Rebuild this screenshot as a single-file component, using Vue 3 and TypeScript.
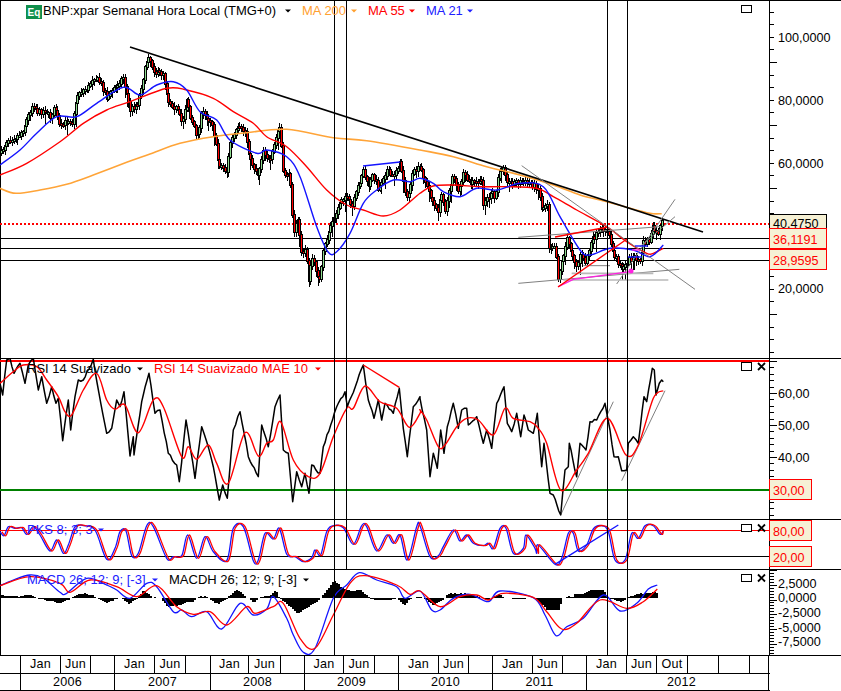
<script setup lang="ts">
type Pt = [number, number]

function z(xo: number, yo: number, a: number[]): Pt[] {
  const out: Pt[] = []
  for (let i = 0; i < a.length; i += 2) out.push([xo + a[i] / 3, yo + a[i + 1] / 3])
  return out
}
const poly = (p: Pt[]) => p.map((q) => `${q[0].toFixed(1)},${q[1].toFixed(1)}`).join(' ')
function smooth(p: Pt[]): string {
  let d = `M${p[0][0].toFixed(1)} ${p[0][1].toFixed(1)}`
  for (let i = 0; i < p.length - 1; i++) {
    const a = p[Math.max(i - 1, 0)]
    const b = p[i]
    const c = p[i + 1]
    const e = p[Math.min(i + 2, p.length - 1)]
    const c1x = b[0] + (c[0] - a[0]) / 6
    const c1y = b[1] + (c[1] - a[1]) / 6
    const c2x = c[0] - (e[0] - b[0]) / 6
    const c2y = c[1] - (e[1] - b[1]) / 6
    d += `C${c1x.toFixed(1)} ${c1y.toFixed(1)} ${c2x.toFixed(1)} ${c2y.toFixed(1)} ${c[0].toFixed(1)} ${c[1].toFixed(1)}`
  }
  return d
}
let seed = 7
const rnd = () => {
  seed = (seed * 16807) % 2147483647
  return seed / 2147483647
}
/* walk a traced outline in weekly steps, adding a little noise between key points */
function weekly(p: Pt[], noise: number): Pt[] {
  const out: Pt[] = []
  for (let i = 0; i < p.length - 1; i++) {
    const [x0, y0] = p[i]
    const [x1, y1] = p[i + 1]
    out.push([x0, y0])
    const n = Math.floor((x1 - x0) / 1.82)
    for (let k = 1; k < n; k++) {
      const t = k / n
      out.push([x0 + (x1 - x0) * t, y0 + (y1 - y0) * t + (rnd() - 0.5) * noise])
    }
  }
  out.push(p[p.length - 1])
  return out
}
function at(p: Pt[], x: number): number {
  for (let i = 0; i < p.length - 1; i++) {
    if (x <= p[i + 1][0]) {
      const t = (x - p[i][0]) / Math.max(p[i + 1][0] - p[i][0], 0.01)
      return p[i][1] + Math.max(t, 0) * (p[i + 1][1] - p[i][1])
    }
  }
  return p[p.length - 1][1]
}

/* ---- price ---- */
const pricePath: number[] = [1,153,7,140,17,137,22,132,28,117,33,103,38,113,45,110,50,117,55,108,60,128,67,120,72,122,78,93,88,88,93,77,100,82,107,98,115,87,123,78,130,110,138,103,143,78,148,55,155,73,163,73,168,100,177,110,182,123,187,97,190,117,197,137,202,112,212,123,215,140,218,163,222,167,227,172,230,143,238,128,245,132,250,160,258,175,263,150,270,163,277,133,280,127,283,173,290,177,292,207,293,233,298,220,302,258,306,247,308,283,312,258,320,282,323,253,330,227,335,217,340,200,345,197,352,207,357,190,363,170,368,187,373,175,378,188,387,170,392,177,400,163,407,200,413,173,420,167,428,190,437,213,442,193,445,210,453,173,458,193,463,175,470,183,482,182,483,203,492,193,495,200,498,177,503,165,508,183,517,182,530,183,538,188,542,210,547,203,548,247,555,245,558,278,562,260,567,240,577,267,580,253,585,263,592,240,598,233,605,228,610,240,613,253,623,270,628,260,635,257,640,263,643,243,650,240,652,227,657,235,662,222]
const pricePts: Pt[] = []
for (let i = 0; i < pricePath.length; i += 2) pricePts.push([pricePath[i], pricePath[i + 1]])

interface Candle { x: number; hi: number; lo: number; top: number; h: number; up: boolean }
const candles: Candle[] = []
let prev = at(pricePts, 1)
for (let x = 1; x <= 662; x += 1.82) {
  const px = Math.round(x)
  const close = at(pricePts, x) + (rnd() - 0.5) * 5
  const top = Math.min(prev, close) - 1
  const bot = Math.max(prev, close) + 1
  candles.push({
    x: px,
    hi: top - 1 - rnd() * 3,
    lo: bot + 1 + rnd() * (rnd() > 0.8 ? 11 : 4),
    top,
    h: Math.max(bot - top, 3),
    up: close < prev,
  })
  prev = close
}

const ma200 = smooth([
  ...z(0,0,[0,565,48,580,120,570,200,553,280,525,380,487,450,462,540,430,640,410,740,398,860,388,1000,413,1100,422,1260,450]),
  ...z(420,0,[100,470,200,500,300,525,400,555,480,585,560,605,620,622,690,640,725,641]),
])
const ma55 = smooth([
  ...z(0,0,[0,525,80,490,180,425,250,370,320,330,390,305,500,265,560,270,640,295,700,335,760,370,800,410,860,440,920,500,980,570,1040,615,1090,630,1150,648,1200,630,1260,580]),
  ...z(420,0,[40,558,100,555,180,560,260,560,350,565,400,590,470,630,560,680,620,725,680,760,700,760,730,745]),
])
const ma21 = smooth([
  ...z(0,0,[0,495,60,450,110,400,170,350,230,350,290,310,370,262,420,285,470,255,520,245,560,270,600,335,650,360,690,420,770,460,800,450,860,470,900,530,950,680,985,757,1010,755,1050,700,1090,610,1130,570,1180,540,1230,545,1260,535]),
  ...z(420,0,[40,550,70,575,120,590,170,565,230,570,300,550,370,560,420,650,480,750,510,765,570,745,640,750,690,770,730,735]),
])

const grayLines = [
  [305,497,825,868],[590,852,765,598],[295,712,720,680],[295,850,778,808],[660,740,765,650],[490,797,570,797],
].map((l) => ({ x1: 420 + l[0] / 3, y1: l[1] / 3, x2: 420 + l[2] / 3, y2: l[3] / 3 }))
const paleLines = [
  [455,820,700,820],[430,840,745,840],
].map((l) => ({ x1: 420 + l[0] / 3, y1: l[1] / 3, x2: 420 + l[2] / 3, y2: l[3] / 3 }))
const magenta = poly(z(420,0,[415,860,460,838,630,815]))

/* ---- RSI ---- */
const rsiBlack = poly(weekly([
  ...z(0,350,[0,100,8,135,20,30,30,25,42,70,60,40,75,100,85,45,100,25,115,120,125,80,140,160,155,110,168,160,175,145,188,272,205,150,212,240,225,140,235,90,250,90,280,28,297,130,320,250,335,235,350,150,360,170,372,125,390,318,400,260,402,315,425,155,447,70,465,190,480,180,505,310,530,345,538,395,558,210,585,385,605,230,620,275,640,350,658,450,668,405,682,445,700,240,720,185,745,320,775,380,785,225,805,290,825,170,840,135,850,300,865,310,878,455,890,365,905,410,915,370,927,430,935,345,960,370,970,290,1003,190,1010,170,1035,125,1042,170,1090,45,1105,150,1122,205,1135,150,1145,210,1155,160,1180,190,1198,115,1210,235,1222,320,1240,170,1260,140]),
  ...z(420,350,[0,145,20,240,30,380,40,310,52,355,62,240,72,310,82,230,100,160,115,235,125,180,140,175,145,225,170,200,190,280,200,240,215,295,230,160,252,110,262,220,275,245,290,190,302,260,312,195,325,240,340,250,352,190,365,350,372,280,390,430,400,435,422,495,435,360,445,350,448,280,470,380,480,280,498,300,510,215,530,210,555,160,570,240,582,320,595,320,605,362,620,360,625,280,640,260,655,280,672,140,680,155,697,55,703,60,708,135,718,100,725,90,730,95]),
], 3))
const rsiRed = smooth([
  ...z(0,350,[0,100,40,65,70,45,110,50,140,90,175,140,195,185,215,195,250,120,290,70,320,150,345,178,375,165,415,248,460,150,490,170,545,320,565,290,590,328,625,285,650,340,685,400,735,248,775,318,800,280,820,270,842,215,880,330,925,380,960,370,1000,260,1040,175,1060,175,1095,108,1140,155,1190,175,1228,232,1260,190]),
  ...z(420,350,[0,180,20,210,55,290,75,285,110,230,140,205,175,210,220,255,255,175,280,205,330,215,355,235,380,280,422,420,470,360,505,310,562,205,618,315,655,285,700,145,730,122]),
])
const rsiDiag = poly(z(0,350,[1090,45,1198,112]))
const rsiGray = [poly(z(420,350,[422,495,580,155])), poly(z(420,350,[605,392,735,122]))]

/* ---- PKS ---- */
const pksPts: Pt[] = [
  ...z(0,515,[0,50,12,62,25,35,45,40,65,38,80,58,100,35,120,60,150,108,170,75,190,115,205,90,225,35,250,32,285,45,320,133,345,100,360,50,378,48,395,122,415,115,440,32,460,35,500,130,520,125,545,122,563,60,590,130,615,65,640,110,680,137,700,40,730,35,760,137,775,135,795,55,820,72,838,40,860,118,885,125,910,140,935,128,945,105,962,120,980,50,1000,32,1030,38,1060,88,1085,32,1100,35,1130,108,1160,60,1180,85,1200,60,1222,135,1250,35]),
  ...z(420,515,[0,32,30,125,55,122,70,95,100,45,120,78,140,60,160,85,190,92,205,85,220,100,240,40,258,40,280,115,310,100,318,60,345,100,350,115,355,90,405,148,425,130,445,55,460,55,475,108,500,90,520,42,545,32,565,50,585,135,615,135,635,55,655,70,675,32,700,32,720,58,730,48]),
]
const pksBlue = smooth(pksPts)
const pksRed = smooth(pksPts.map((p, i) => [p[0] + (i === pksPts.length - 1 ? 0 : 1.8), p[1]] as Pt))
const pksTrend = poly(z(420,515,[405,148,595,30]))

/* ---- MACD ---- */
const macdBlue = smooth([
  ...z(0,515,[0,212,40,195,90,180,130,190,180,232,200,235,260,190,320,210,350,225,390,250,440,205,470,215,520,290,545,285,575,305,620,290,665,342,720,265,760,300,800,282,820,245,860,310,880,360,910,412,945,400,1000,250,1040,210,1078,173,1130,195,1190,215,1215,250,1260,228]),
  ...z(420,515,[35,285,60,285,100,250,150,238,205,260,240,228,340,248,375,300,408,362,440,335,490,310,550,240,600,288,650,265,685,222,712,210]),
])
const macdRed = smooth([
  ...z(0,515,[0,212,90,185,180,205,210,232,270,195,350,215,410,245,470,212,530,275,580,298,630,290,680,330,740,275,765,295,820,275,850,265,900,370,945,400,1000,300,1050,205,1095,182,1190,210,1230,238,1260,228]),
  ...z(420,515,[60,275,120,245,170,240,205,255,250,235,340,247,380,290,425,342,470,325,540,255,620,280,670,260,712,222]),
])
const histOutline: Pt[] = [
  ...z(0,515,[0,240,50,245,88,238,105,248,118,252,150,258,175,266,205,252,235,235,270,238,290,248,315,264,355,248,362,250,385,267,410,250,430,225,455,248,480,250,500,275,540,270,560,258,575,262,590,248,605,243,625,250,650,268,680,248,707,222,740,248,760,262,775,248,810,240,825,225,835,248,890,295,950,260,1000,198,1030,222,1060,228,1080,225,1110,252,1150,258,1190,250,1210,272,1230,250,1260,245]),
  ...z(420,515,[40,270,75,248,80,235,120,235,160,240,200,256,235,235,250,248,290,252,340,248,380,285,415,285,425,250,445,243,455,248,460,238,495,235,510,225,550,225,560,248,600,262,620,248,660,235,712,232]),
]
const histBase = 597.5
const histBars: { x: number; y: number; h: number }[] = []
for (let x = 0; x < 658; x += 2) {
  const y = Math.round(at(histOutline, x) + (rnd() - 0.5) * 1)
  histBars.push({ x, y: Math.min(y, histBase), h: Math.max(Math.abs(y - histBase), 0.6) })
}

/* ---- axis ticks ---- */
function ticks(from: number, to: number, step: number, every: number) {
  const out: { y: number; len: number }[] = []
  let i = 0
  for (let y = from; y < to; y += step, i++) out.push({ y: Math.round(y) + 0.5, len: i % every === 0 ? 7 : 4 })
  return out
}
const mainTicks = ticks(-1, 358, 12.6, 5)
const rsiTicks = ticks(361, 519, 6.4, 5)
const pksTicks = ticks(521, 569, 6.4, 5)
const macdTicks = ticks(570, 655, 2.95, 5)

const v = { a: 334.5, b: 346.5, c: 607.5, d: 627.5 }

/* ---- time axis ---- */
const monthEdges = [0,21,61,91,115,155,186,211,249,281,305,344,375,399,439,469,493,533,563,587,627,657,688,719,750,769]
const monthNames = ['', 'Jan', 'Jun', '', 'Jan', 'Jun', '', 'Jan', 'Jun', '', 'Jan', 'Jun', '', 'Jan', 'Jun', '', 'Jan', 'Jun', '', 'Jan', 'Jun', 'Out', '', '', '']
const months = monthNames.map((label, i) => ({ label, w: monthEdges[i + 1] - monthEdges[i] }))
const yearEdges = [0,21,115,211,305,399,493,587,769]
const yearNames = ['', '2006', '2007', '2008', '2009', '2010', '2011', '2012']
const years = yearNames.map((label, i) => ({ label, w: yearEdges[i + 1] - yearEdges[i] }))
</script>

<template>
  <div class="app">
    <!-- main price panel -->
    <div class="panel main">
      <svg class="chart" width="841" height="358" viewBox="0 0 841 358">
        <line x1="0" y1="0.5" x2="841" y2="0.5" class="k" />
        <line x1="0.5" y1="0" x2="0.5" y2="358" class="k" />
        <line x1="0" y1="238.5" x2="770" y2="238.5" class="k" />
        <line x1="0" y1="248.5" x2="770" y2="248.5" class="k" />
        <line x1="0" y1="260.5" x2="770" y2="260.5" class="k" />
        <line x1="0" y1="224" x2="770" y2="224" class="dots" />

        <g v-for="(c, i) in candles" :key="i" shape-rendering="crispEdges">
          <rect :x="c.x" :y="c.hi" width="1" :height="c.lo - c.hi" fill="#000" />
          <rect :x="c.x - 1" :y="c.top" width="3" :height="c.h" fill="#000" />
          <rect :x="c.x" :y="c.top + 1" width="1" :height="Math.max(c.h - 2, 1)" :fill="c.up ? '#8fdc8f' : '#ff0000'" />
        </g>

        <path :d="ma200" class="ln orange" />
        <path :d="ma55" class="ln red" />
        <path :d="ma21" class="ln blue" />

        <line x1="130" y1="47" x2="703" y2="232" class="trend" />
        <line v-for="(l, i) in grayLines" :key="'g' + i" :x1="l.x1" :y1="l.y1" :x2="l.x2" :y2="l.y2" class="gray" />
        <line v-for="(l, i) in paleLines" :key="'p' + i" :x1="l.x1" :y1="l.y1" :x2="l.x2" :y2="l.y2" class="pale" />
        <polyline :points="magenta" class="ln magenta" />
        <circle cx="631" cy="271" r="2.5" fill="#ff20e0" />
        <line x1="632" y1="250" x2="640" y2="250" class="ln magenta" />
        <line x1="555" y1="237" x2="608" y2="227" class="ln red" />
        <line x1="558" y1="287" x2="627" y2="239" class="ln red" />
        <line x1="363" y1="166" x2="400" y2="162" class="ln blue" />
        <line x1="628" y1="257" x2="642" y2="257" class="ln blue" />
        <line x1="635" y1="246" x2="648" y2="246" class="ln blue" />

        <line :x1="v.a" y1="0" :x2="v.a" y2="358" class="k" />
        <line :x1="v.b" y1="0" :x2="v.b" y2="358" class="k" />
        <line :x1="v.c" y1="0" :x2="v.c" y2="358" class="k" />
        <line :x1="v.d" y1="0" :x2="v.d" y2="358" class="k" />

        <!-- legend -->
        <rect x="26" y="5" width="16" height="14" fill="#0f8f4c" />
        <text x="34" y="16" class="eq">Eq</text>
        <text x="43" y="15" class="t">BNP:xpar Semanal Hora Local (TMG+0)</text>
        <polygon points="285,9.5 291,9.5 288,12.5" fill="#000" />
        <text x="302" y="15" class="t" fill="#ffa030">MA 200</text>
        <polygon points="351,9.5 357,9.5 354,12.5" fill="#ffa030" />
        <text x="368" y="15" class="t" fill="#ff0000">MA 55</text>
        <polygon points="409,9.5 415,9.5 412,12.5" fill="#ff0000" />
        <text x="426" y="15" class="t" fill="#2020ff">MA 21</text>
        <polygon points="467,9.5 473,9.5 470,12.5" fill="#2020ff" />
        <rect x="741.5" y="5.5" width="10" height="7" class="win" />

        <!-- axis -->
        <line x1="769.5" y1="0" x2="769.5" y2="358" class="k" />
        <line v-for="(t, i) in mainTicks" :key="'mt' + i" x1="770" :y1="t.y" :x2="770 + t.len" :y2="t.y" class="k" />
        <text x="778" y="42" class="n">100,0000</text>
        <text x="778" y="105" class="n">80,0000</text>
        <text x="778" y="168" class="n">60,0000</text>
        <text x="778" y="293" class="n">20,0000</text>
        <rect x="769.5" y="214.5" width="57" height="14" class="box dark" />
        <text x="773" y="228" class="n">40,4750</text>
        <rect x="769.5" y="228.5" width="57" height="20" class="box" />
        <text x="773" y="243.5" class="n rd">36,1191</text>
        <rect x="769.5" y="249.5" width="57" height="20" class="box" />
        <text x="773" y="265" class="n rd">28,9595</text>
      </svg>
    </div>

    <!-- RSI panel -->
    <div class="panel rsi">
      <svg class="chart" width="841" height="160" viewBox="0 359 841 160">
        <line x1="0.5" y1="359" x2="0.5" y2="519" class="k" />
        <line x1="0" y1="361" x2="770" y2="361" class="redbar" />
        <line x1="0" y1="490" x2="770" y2="490" class="green" />
        <polyline v-for="(g, i) in rsiGray" :key="i" :points="g" class="gray" />
        <polyline :points="rsiBlack" class="blk" />
        <path :d="rsiRed" class="ln red" />
        <polyline :points="rsiDiag" class="ln red" />
        <line :x1="v.a" y1="359" :x2="v.a" y2="519" class="k" />
        <line :x1="v.b" y1="359" :x2="v.b" y2="519" class="k" />
        <line :x1="v.c" y1="359" :x2="v.c" y2="519" class="k" />
        <line :x1="v.d" y1="359" :x2="v.d" y2="519" class="k" />

        <text x="27" y="373" class="t">RSI 14 Suavizado</text>
        <polygon points="137,367.5 143,367.5 140,370.5" fill="#000" />
        <text x="154" y="373" class="t" fill="#ff0000">RSI 14 Suavizado MAE 10</text>
        <polygon points="315,367.5 321,367.5 318,370.5" fill="#ff0000" />
        <rect x="741.5" y="362.5" width="10" height="8" class="win" />
        <path d="M758 363L765 370M765 363L758 370" class="cross" />

        <line x1="769.5" y1="359" x2="769.5" y2="519" class="k" />
        <line v-for="(t, i) in rsiTicks" :key="'rt' + i" x1="770" :y1="t.y" :x2="770 + t.len" :y2="t.y" class="k" />
        <text x="778" y="398" class="n">60,00</text>
        <text x="778" y="430" class="n">50,00</text>
        <text x="778" y="462" class="n">40,00</text>
        <rect x="769.5" y="479.5" width="42" height="20" class="box" />
        <text x="773" y="495" class="n rd">30,00</text>
      </svg>
    </div>

    <!-- PKS panel -->
    <div class="panel pks">
      <svg class="chart" width="841" height="49" viewBox="0 520 841 49">
        <line x1="0.5" y1="520" x2="0.5" y2="569" class="k" />
        <line x1="0" y1="530.5" x2="770" y2="530.5" class="redthin" />
        <line x1="0" y1="556.5" x2="770" y2="556.5" class="k" />
        <path :d="pksBlue" class="ln blue thin" />
        <path :d="pksRed" class="ln red thin" />
        <polyline :points="pksTrend" class="ln blue" />
        <line :x1="v.a" y1="520" :x2="v.a" y2="569" class="k" />
        <line :x1="v.b" y1="520" :x2="v.b" y2="569" class="k" />
        <line :x1="v.c" y1="520" :x2="v.c" y2="569" class="k" />
        <line :x1="v.d" y1="520" :x2="v.d" y2="569" class="k" />
        <text x="27" y="534" class="t" fill="#2020ff">PKS 8; 3; 3</text>
        <polygon points="98,528.5 104,528.5 101,531.5" fill="#2020ff" />
        <rect x="741.5" y="524.5" width="10" height="7" class="win" />
        <path d="M758 524.5L765 531.5M765 524.5L758 531.5" class="cross" />
        <line x1="769.5" y1="520" x2="769.5" y2="569" class="k" />
        <line v-for="(t, i) in pksTicks" :key="'pt' + i" x1="770" :y1="t.y" :x2="770 + t.len" :y2="t.y" class="k" />
        <rect x="769.5" y="520.5" width="42" height="20" class="box" />
        <text x="773" y="535.5" class="n rd">80,00</text>
        <rect x="769.5" y="546.5" width="42" height="20" class="box" />
        <text x="773" y="562" class="n rd">20,00</text>
      </svg>
    </div>

    <!-- MACD panel -->
    <div class="panel macd">
      <svg class="chart" width="841" height="85" viewBox="0 570 841 85">
        <line x1="0.5" y1="570" x2="0.5" y2="655" class="k" />
        <rect v-for="(b, i) in histBars" :key="'h' + i" :x="b.x" :y="b.y" width="2" :height="b.h" fill="#000" shape-rendering="crispEdges" />
        <path :d="macdBlue" class="ln blue thin" />
        <path :d="macdRed" class="ln red thin" />
        <line :x1="v.a" y1="570" :x2="v.a" y2="655" class="k" />
        <line :x1="v.c" y1="570" :x2="v.c" y2="655" class="k" />
        <line :x1="v.d" y1="570" :x2="v.d" y2="655" class="k" />
        <text x="27" y="584" class="t" fill="#2020ff">MACD 26; 12; 9; [-3]</text>
        <polygon points="152,578.5 158,578.5 155,581.5" fill="#2020ff" />
        <text x="169" y="584" class="t">MACDH 26; 12; 9; [-3]</text>
        <polygon points="303,578.5 309,578.5 306,581.5" fill="#000" />
        <rect x="741.5" y="574.5" width="10" height="7" class="win" />
        <path d="M758 574.5L765 581.5M765 574.5L758 581.5" class="cross" />
        <line x1="769.5" y1="570" x2="769.5" y2="655" class="k" />
        <line v-for="(t, i) in macdTicks" :key="'at' + i" x1="770" :y1="t.y" :x2="770 + t.len" :y2="t.y" class="k" />
        <text x="778" y="588" class="n">2,5000</text>
        <text x="778" y="602" class="n">0,0000</text>
        <text x="778" y="617" class="n">-2,5000</text>
        <text x="778" y="632" class="n">-5,0000</text>
        <text x="778" y="646" class="n">-7,5000</text>
      </svg>
    </div>

    <!-- time axis -->
    <div class="time">
      <div class="row months">
        <div v-for="(m, i) in months" :key="i" class="cell" :style="{ width: m.w + 'px' }">{{ m.label }}</div>
      </div>
      <div class="row years">
        <div v-for="(y, i) in years" :key="i" class="cell" :class="{ last: i === 7 }" :style="{ width: y.w + 'px' }">{{ y.label }}</div>
      </div>
    </div>
  </div>
</template>

<style scoped>
.app {
  width: 841px;
  height: 691px;
  background: #fff;
  display: flex;
  flex-direction: column;
  overflow: hidden;
  font-family: "Liberation Sans", Arial, sans-serif;
}
.panel {
  border-bottom: 1px solid #000;
  flex: none;
}
.chart {
  display: block;
}
.k {
  stroke: #000;
  stroke-width: 1;
  shape-rendering: crispEdges;
}
.dots {
  stroke: #ff0000;
  stroke-width: 2;
  stroke-dasharray: 2 2;
}
.ln {
  fill: none;
  stroke-width: 1.4;
  stroke-linejoin: round;
}
.ln.thin {
  stroke-width: 1.3;
}
.orange {
  stroke: #ffa438;
  stroke-width: 1.6;
}
.red {
  stroke: #ff0000;
}
.blue {
  stroke: #1414ff;
}
.magenta {
  stroke: #ff20e0;
  stroke-width: 1.3;
}
.trend {
  stroke: #000;
  stroke-width: 1.7;
}
.gray {
  fill: none;
  stroke: #808080;
  stroke-width: 1;
}
.pale {
  stroke: #b8b8b8;
  stroke-width: 1.6;
}
.blk {
  fill: none;
  stroke: #000;
  stroke-width: 1.5;
  stroke-linejoin: round;
}
.redbar {
  stroke: #ff0000;
  stroke-width: 2;
}
.redthin {
  stroke: #ff0000;
  stroke-width: 1;
  shape-rendering: crispEdges;
}
.green {
  stroke: #008000;
  stroke-width: 2;
}
.win {
  fill: #fff;
  stroke: #000;
  stroke-width: 1;
  shape-rendering: crispEdges;
}
.cross {
  fill: none;
  stroke: #000;
  stroke-width: 1.8;
}
.t {
  font-size: 13px;
}
.t:not([fill]) {
  fill: #000;
}
.eq {
  font-size: 10px;
  fill: #fff;
  text-anchor: middle;
  font-weight: 700;
}
.n {
  font-size: 12.6px;
  fill: #000;
}
.n.rd {
  fill: #ff0000;
}
.box {
  fill: #f6f1d5;
  stroke: #ff0000;
  stroke-width: 1;
  shape-rendering: crispEdges;
}
.box.dark {
  stroke: #000;
}
.time {
  width: 770px;
  flex: none;
}
.row {
  display: flex;
  border-bottom: 1px solid #000;
}
.months {
  height: 17px;
}
.years {
  height: 16px;
}
.cell {
  flex: none;
  box-sizing: border-box;
  border-right: 1px solid #000;
  text-align: center;
  font-size: 12.6px;
  line-height: 17px;
  color: #000;
  letter-spacing: 0.2px;
}
.cell.last {
  padding-left: 8px;
}
</style>
